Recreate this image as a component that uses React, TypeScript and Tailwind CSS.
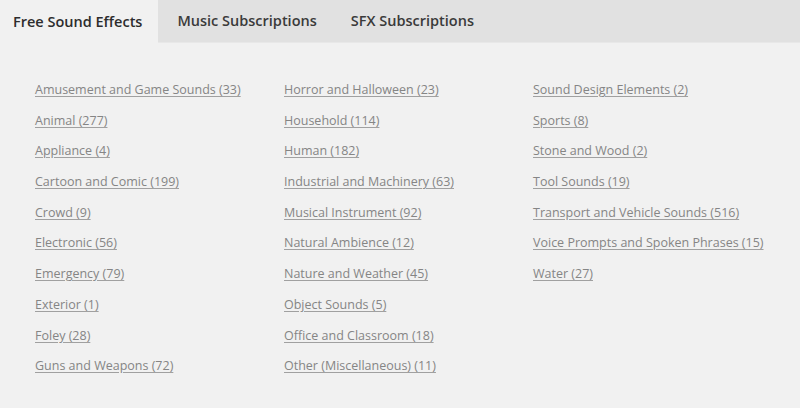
const columns: string[][] = [
  [
    'Amusement and Game Sounds (33)',
    'Animal (277)',
    'Appliance (4)',
    'Cartoon and Comic (199)',
    'Crowd (9)',
    'Electronic (56)',
    'Emergency (79)',
    'Exterior (1)',
    'Foley (28)',
    'Guns and Weapons (72)',
  ],
  [
    'Horror and Halloween (23)',
    'Household (114)',
    'Human (182)',
    'Industrial and Machinery (63)',
    'Musical Instrument (92)',
    'Natural Ambience (12)',
    'Nature and Weather (45)',
    'Object Sounds (5)',
    'Office and Classroom (18)',
    'Other (Miscellaneous) (11)',
  ],
  [
    'Sound Design Elements (2)',
    'Sports (8)',
    'Stone and Wood (2)',
    'Tool Sounds (19)',
    'Transport and Vehicle Sounds (516)',
    'Voice Prompts and Spoken Phrases (15)',
    'Water (27)',
  ],
];

const tabs = ['Free Sound Effects', 'Music Subscriptions', 'SFX Subscriptions'];

export default function App() {
  return (
    <div className="w-[800px] h-[408px] bg-[#f1f1f1] font-['Open_Sans',sans-serif] overflow-hidden">
      {/* Tabs */}
      <div className="flex h-[43px] bg-[#e1e1e1] border-b border-[#e8e8e8]">
        {tabs.map((t, i) => (
          <div
            key={t}
            className={
              i === 0
                ? 'flex items-center pl-[13px] pr-[16px] bg-[#f1f1f1] text-[#2d2d2d] text-[14.5px] font-semibold -mb-px'
                : 'flex items-center pl-[19px] pr-[15px] text-[#3a3a3a] text-[14.5px] font-semibold'
            }
          >
            {t}
          </div>
        ))}
      </div>

      {/* Categories */}
      <div className="grid grid-cols-[249px_249px_1fr] pl-[35px] pt-[35px]">
        {columns.map((col, ci) => (
          <ul key={ci} className="flex flex-col">
            {col.map((item) => (
              <li key={item} className="h-[30.7px] leading-[20px]">
                <a className="text-[12.5px] text-[#858585] underline underline-offset-2 decoration-[#a0a0a0]">
                  {item}
                </a>
              </li>
            ))}
          </ul>
        ))}
      </div>
    </div>
  );
}
